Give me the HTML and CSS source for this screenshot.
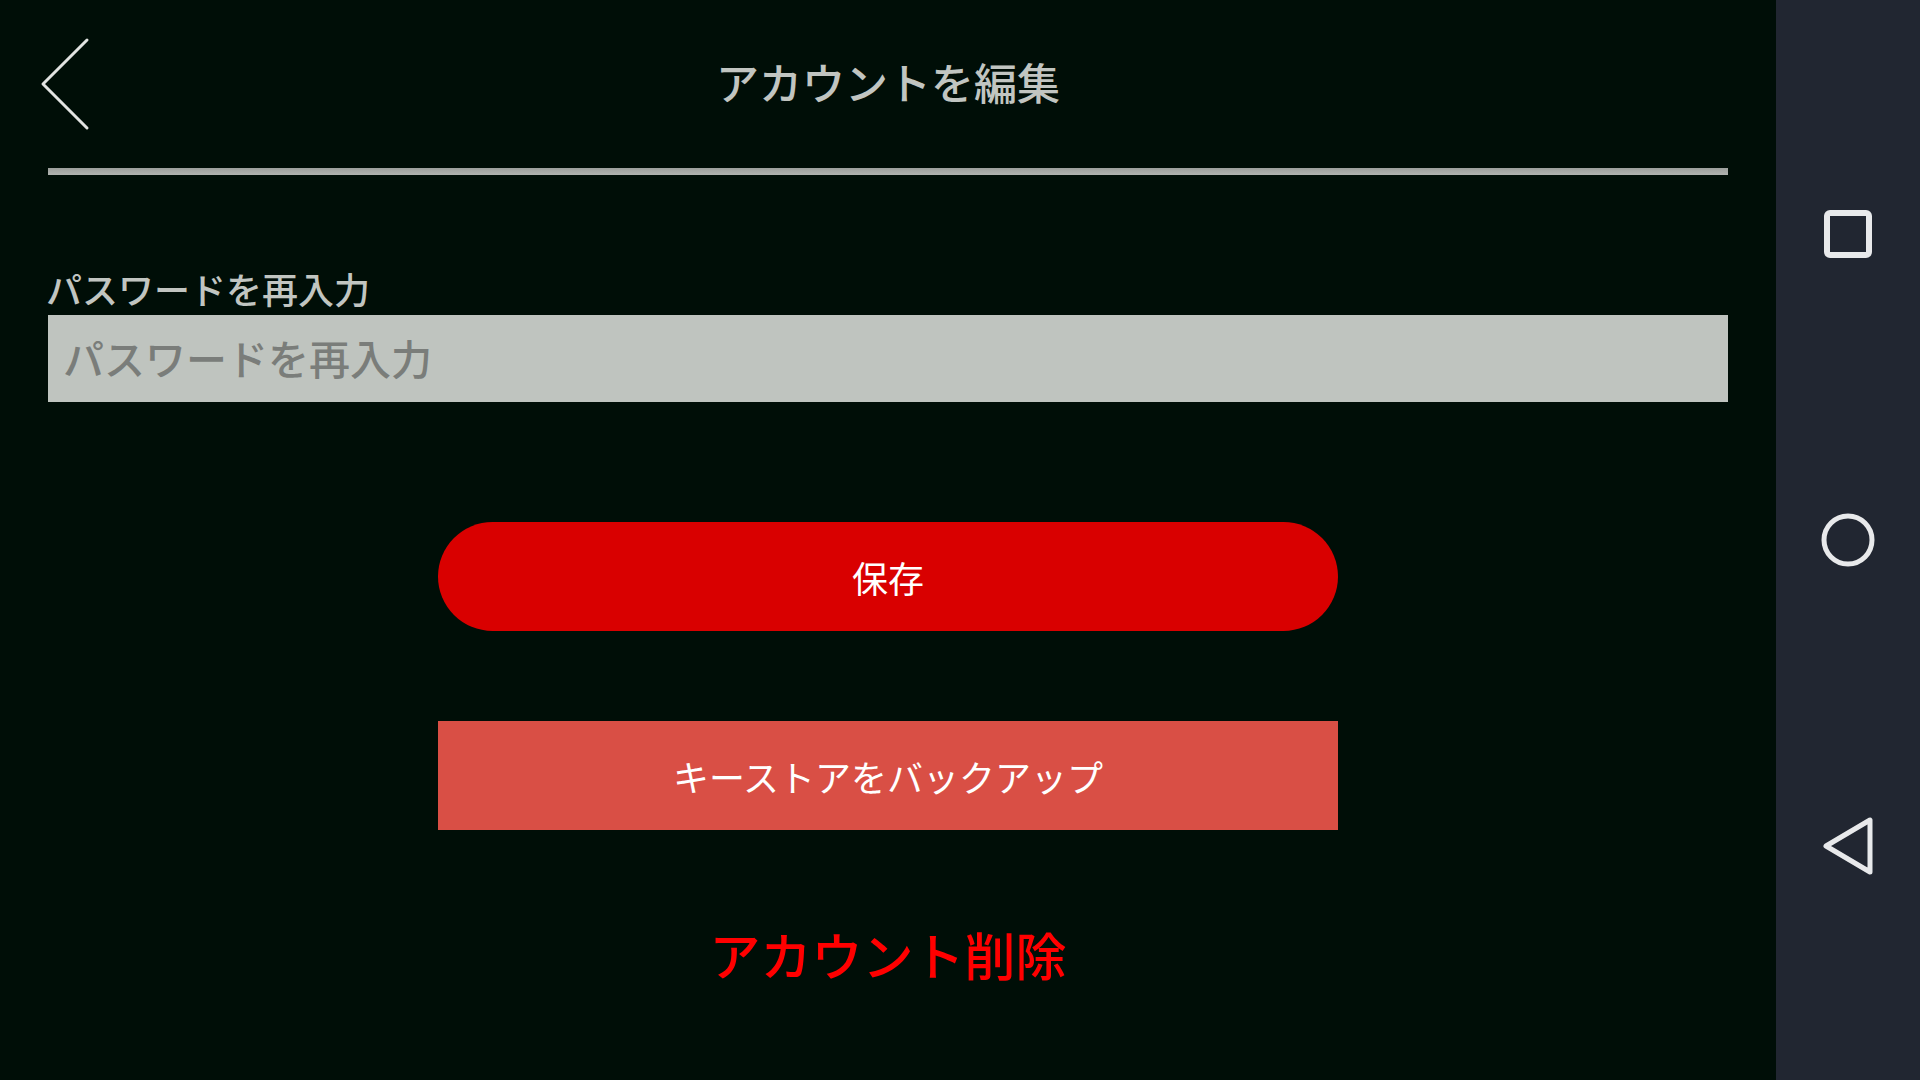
FILE: index.html
```html
<!DOCTYPE html>
<html lang="ja">
<head>
    <meta charset="UTF-8">
    <meta name="viewport" content="width=device-width, initial-scale=1.0">
    <title>アカウントを編集</title>
    <link rel="stylesheet" href="styles.css">
</head>
<body>
    <div class="screen">
        <main class="content">
            <header class="top-bar">
                <button class="back-button" aria-label="戻る">
                    <svg width="56" height="96" viewBox="0 0 56 96">
                        <polyline points="47,4 3,48 47,92" fill="none" stroke="#e2e4e2" stroke-width="3" stroke-linecap="round" stroke-linejoin="round"/>
                    </svg>
                </button>
                <h1 class="title">アカウントを編集</h1>
                <span></span>
            </header>
            <div class="divider"></div>

            <div class="field">
                <label class="field-label" for="password2">パスワードを再入力</label>
                <input class="field-input" id="password2" type="password" placeholder="パスワードを再入力">
            </div>

            <button class="btn btn-save">保存</button>
            <button class="btn btn-backup">キーストアをバックアップ</button>

            <a class="delete-link" href="#">アカウント削除</a>
        </main>

        <nav class="nav-bar">
            <svg class="nav-icon" width="60" height="60" viewBox="0 0 60 60">
                <rect x="9" y="9" width="42" height="42" rx="3" fill="none" stroke="#e8e9eb" stroke-width="6"/>
            </svg>
            <svg class="nav-icon" width="60" height="60" viewBox="0 0 60 60">
                <circle cx="30" cy="30" r="24" fill="none" stroke="#e8e9eb" stroke-width="5"/>
            </svg>
            <svg class="nav-icon" width="60" height="60" viewBox="0 0 60 60">
                <polygon points="8,30 52,4 52,56" fill="none" stroke="#e8e9eb" stroke-width="5" stroke-linejoin="round"/>
            </svg>
        </nav>
    </div>
</body>
</html>
```

FILE: styles.css
```css
* {
    margin: 0;
    padding: 0;
    box-sizing: border-box;
}

body {
    background: #000e07;
    font-family: "Noto Sans CJK JP", "Noto Sans", sans-serif;
    overflow: hidden;
}

.screen {
    display: flex;
    width: 1920px;
    height: 1080px;
}

.content {
    flex: 1;
    display: flex;
    flex-direction: column;
    align-items: center;
    padding: 0 48px;
}

.top-bar {
    width: 100%;
    height: 168px;
    display: grid;
    grid-template-columns: 1fr auto 1fr;
    align-items: center;
}

.back-button {
    background: none;
    border: none;
    width: 56px;
    height: 96px;
    margin-left: -8px;
    cursor: pointer;
}

.title {
    font-size: 43px;
    font-weight: 500;
    color: #c1c5c1;
    line-height: 1;
    margin-bottom: 6px;
}

.divider {
    width: 100%;
    height: 7px;
    background: linear-gradient(#9c9f9c, #b0b3b0);
}

.field {
    width: 100%;
    margin-top: 91px;
}

.field-label {
    display: block;
    font-size: 36px;
    line-height: 44px;
    font-weight: 500;
    color: #c1c5c1;
    margin: 0 0 5px -2px;
}

.field-input {
    display: block;
    width: 100%;
    height: 87px;
    border: none;
    outline: none;
    background: #bfc4bf;
    padding: 0 17px 4px 15px;
    font-family: inherit;
    font-size: 41px;
    color: #333;
}

.field-input::placeholder {
    color: #7a7d7a;
    font-weight: 500;
}

.btn {
    width: 900px;
    height: 109px;
    border: none;
    color: #fff;
    font-family: inherit;
    font-size: 36px;
    font-weight: 400;
    cursor: pointer;
}

.btn-save {
    margin-top: 120px;
    background: #d90000;
    border-radius: 55px;
}

.btn-backup {
    margin-top: 90px;
    background: #d94f45;
}

.delete-link {
    margin-top: 93px;
    font-size: 51px;
    line-height: 62px;
    font-weight: 500;
    color: #ff0000;
    text-decoration: none;
}

.nav-bar {
    width: 144px;
    background: #212631;
    display: flex;
    flex-direction: column;
    align-items: center;
    justify-content: center;
    gap: 246px;
}

.nav-icon {
    display: block;
}
```
